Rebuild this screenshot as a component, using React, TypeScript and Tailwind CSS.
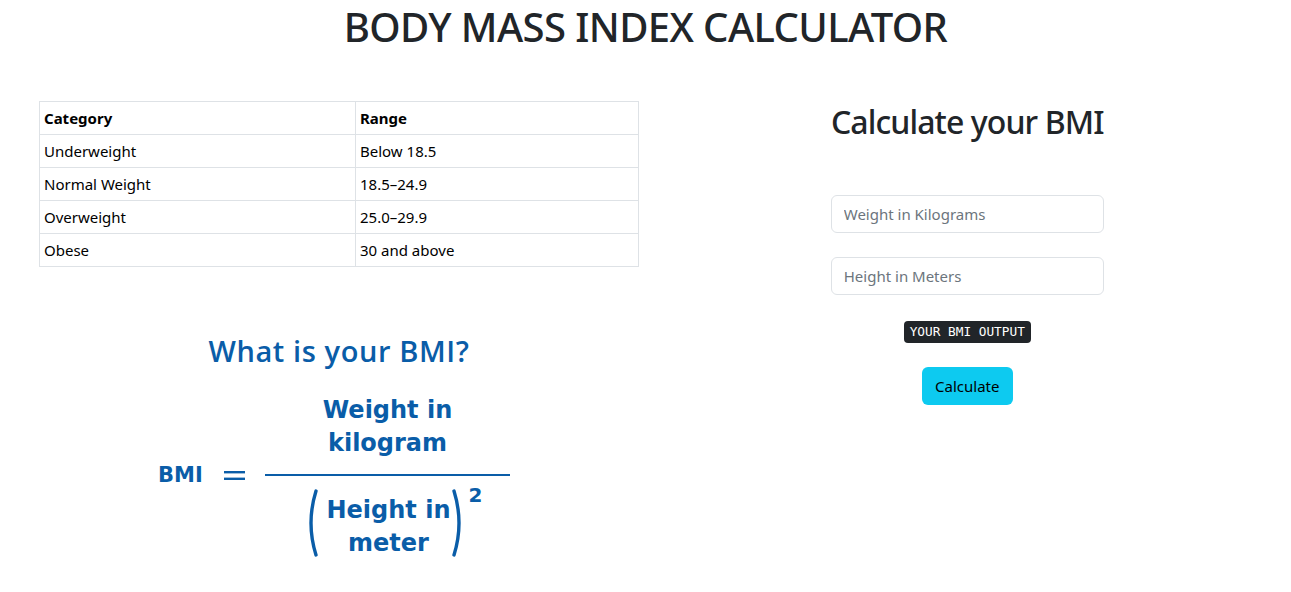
import React from "react";

const rows: [string, string][] = [
  ["Underweight", "Below 18.5"],
  ["Normal Weight", "18.5–24.9"],
  ["Overweight", "25.0–29.9"],
  ["Obese", "30 and above"],
];

const BLUE = "#0a5da8";

function Paren({ right }: { right?: boolean }) {
  return (
    <svg width="12" height="68" viewBox="0 0 12 68" className="shrink-0">
      <path
        d={right ? "M2 2 Q12 34 2 66" : "M10 2 Q0 34 10 66"}
        fill="none"
        stroke={BLUE}
        strokeWidth="3.4"
        strokeLinecap="round"
      />
    </svg>
  );
}

function Formula() {
  return (
    <div className="text-[#0a5da8]">
      <div className="w-[600px] text-center font-['Open_Sans',sans-serif] font-semibold text-[29px] leading-[34px] tracking-[0.6px]">
        What is your BMI?
      </div>
      <div className="flex items-start ml-[119px] mt-[26px] font-['DejaVu_Sans',sans-serif] font-bold">
        <div className="text-[21px] leading-[21px] mt-[71px] w-[45px]">BMI</div>
        <svg width="21" height="9" viewBox="0 0 21 9" className="ml-[21px] mt-[77px] shrink-0">
          <rect x="0" y="0" width="21" height="2.4" fill={BLUE} />
          <rect x="0" y="6.6" width="21" height="2.4" fill={BLUE} />
        </svg>
        <div className="ml-[20px] w-[245px] flex flex-col items-center">
          <div className="text-[24px] leading-[33px] text-center">
            Weight in
            <br />
            kilogram
          </div>
          <div className="w-full h-[2px] bg-[#0a5da8] mt-[14px]" />
          <div className="relative flex items-start mt-[13px] ml-[-6px]">
            <Paren />
            <div className="text-[24px] leading-[33px] text-center pt-[5px] ml-[9px] mr-[1px]">
              Height in
              <br />
              meter
            </div>
            <Paren right />
            <div className="absolute left-full ml-[5px] -top-[4px] text-[20px] leading-[20px]">2</div>
          </div>
        </div>
      </div>
    </div>
  );
}

export default function App() {
  return (
    <div className="w-[1291px] min-h-[592px] bg-white text-[#212529] font-['Noto_Sans',sans-serif]">
      <h1 className="text-center text-[40px] leading-[54px] font-medium tracking-[-0.6px]">
        BODY MASS INDEX CALCULATOR
      </h1>
      <div className="grid grid-cols-2 mt-[47px]">
        <div className="pl-[39px]">
          <table className="w-[600px] border-collapse text-[15px] leading-[24px] text-black">
            <thead>
              <tr>
                <th className="text-left font-bold border border-[#dee2e6] px-[4px] py-[4px] w-[316px]">Category</th>
                <th className="text-left font-bold border border-[#dee2e6] px-[4px] py-[4px]">Range</th>
              </tr>
            </thead>
            <tbody>
              {rows.map(([a, b]) => (
                <tr key={a}>
                  <td className="border border-[#dee2e6] px-[4px] py-[4px]">{a}</td>
                  <td className="border border-[#dee2e6] px-[4px] py-[4px]">{b}</td>
                </tr>
              ))}
            </tbody>
          </table>
          <div className="mt-[67px]">
            <Formula />
          </div>
        </div>
        <div className="flex flex-col items-center pr-[2px]">
          <h2 className="text-[32px] leading-[38px] font-medium mt-[2px] tracking-[-0.9px]">Calculate your BMI</h2>
          <div className="w-[273px] flex flex-col mt-[54px] gap-[24px]">
            <input
              className="h-[38px] w-full border border-[#dee2e6] rounded-[6px] px-[12px] text-[15px] placeholder:text-[#6c757d] outline-none"
              placeholder="Weight in Kilograms"
            />
            <input
              className="h-[38px] w-full border border-[#dee2e6] rounded-[6px] px-[12px] text-[15px] placeholder:text-[#6c757d] outline-none"
              placeholder="Height in Meters"
            />
          </div>
          <kbd className="mt-[26px] bg-[#212529] text-white font-['DejaVu_Sans_Mono',monospace] text-[12.75px] leading-[16px] px-[6px] py-[3px] rounded-[4px]">
            YOUR BMI OUTPUT
          </kbd>
          <button className="mt-[24px] bg-[#0dcaf0] text-black text-[15px] leading-[24px] h-[38px] w-[91px] rounded-[6px]">
            Calculate
          </button>
        </div>
      </div>
    </div>
  );
}
